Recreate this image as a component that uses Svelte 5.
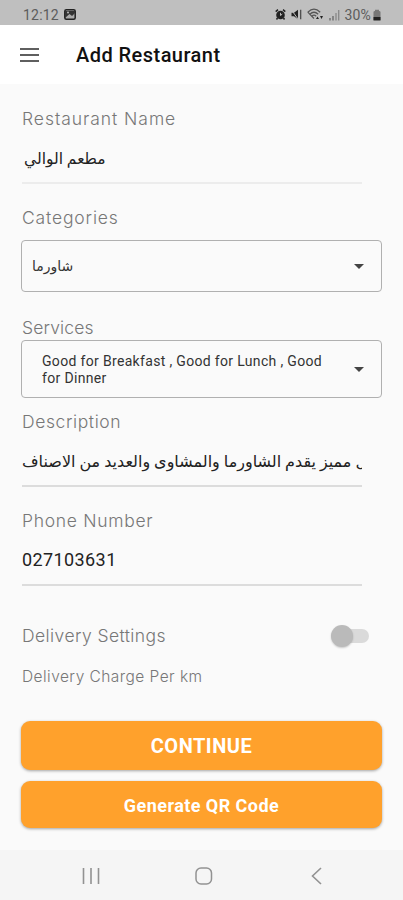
<script lang="ts">
  let restaurantName: string = 'مطعم الوالي';
  let category: string = 'شاورما';
  let services: string[] = ['Good for Breakfast', 'Good for Lunch', 'Good for Dinner'];
  let description: string = 'محل مميز يقدم الشاورما والمشاوى والعديد من الاصناف';
  let phone: string = '027103631';
  let delivery: boolean = false;
</script>

<div class="screen">
  <div class="status">
    <span class="time">12:12</span>
    <svg class="photo" width="12" height="11" viewBox="0 0 12 11">
      <rect x="0.8" y="0.8" width="10.4" height="9.4" rx="1.5" fill="#aaa" stroke="#222" stroke-width="1.5" />
      <path d="M1 2h10v2L8 7 5.500 5 1 9z" fill="#333" />
      <circle cx="4" cy="3.500" r="1" fill="#bbb" />
    </svg>
    <div class="indicators">
      <svg width="11" height="11" viewBox="0 0 11 11">
        <circle cx="5.500" cy="6" r="4.300" fill="#222" />
        <path d="M0.700 2.600L3 0.700M10.300 2.600L8 0.700M2.500 9L1.500 10.500M8.500 9l1 1.500" stroke="#222" stroke-width="1.500" />
        <path d="M5.500 3.800V6.500L7.300 5" fill="none" stroke="#bbb" />
      </svg>
      <svg width="11" height="11" viewBox="0 0 11 11">
        <path d="M0.500 3.800h2.500L7 0.800v9.400L3 7.300H0.500z" fill="#222" />
        <path d="M0.500 1L7 10" stroke="#bfbfbf" stroke-width="1" />
        <path d="M9.700 0.800v9.400" stroke="#444" stroke-width="1.200" />
      </svg>
      <svg width="17" height="13" viewBox="0 0 17 13">
        <g fill="none" stroke="#555" stroke-width="1.200">
          <path d="M0.800 4.200Q7 -1.800 13.200 4.200M2.800 6.200Q7 2.300 11.200 6.200M4.800 8.200Q7 6.200 9.200 8.200" />
          <path d="M0.800 4.200L7 10.500" />
        </g>
        <path d="M9 11l1.500-2.500L12 11zM13 8h3l-1.500 3z" fill="#222" />
      </svg>
      <svg width="11" height="12" viewBox="0 0 11 12">
        <path d="M1 9v2.500M4 7v4.500" stroke="#666" stroke-width="1.300" />
        <path d="M7 4v7.500M9.700 1v10.500" stroke="#888" stroke-width="1.300" />
      </svg>
      <span class="percent">30%</span>
      <svg width="8" height="12" viewBox="0 0 8 12">
        <path d="M0.500 3Q0.500 2 2 2V0.700h4V2Q7.500 2 7.500 3v8h-7z" fill="#777" />
        <path d="M0.500 8h7v3.500h-7z" fill="#222" />
      </svg>
    </div>
  </div>

  <header>
    <button class="menu" aria-label="Menu"><i></i><i></i><i></i></button>
    <h1>Add Restaurant</h1>
  </header>

  <main>
    <label class="label name" for="name">Restaurant Name</label>
    <div class="field arabic first" id="name"><span dir="rtl">{restaurantName}</span></div>

    <div class="label categories">Categories</div>
    <div class="select">
      <span class="value" dir="rtl">{category}</span>
      <i class="caret"></i>
    </div>

    <div class="label services">Services</div>
    <div class="select multi">
      <span class="list">{services.join(' , ')}</span>
      <i class="caret"></i>
    </div>

    <div class="label description">Description</div>
    <div class="field arabic long"><span dir="rtl">{description}</span></div>

    <div class="label phone">Phone Number</div>
    <div class="field number"><span>{phone}</span></div>

    <div class="delivery">
      <span class="label settings">Delivery Settings</span>
      <button
        class="switch"
        class:on={delivery}
        role="switch"
        aria-checked={delivery}
        aria-label="Delivery Settings"
        onclick={() => (delivery = !delivery)}
      ><i></i></button>
    </div>
    <div class="label charge">Delivery Charge Per km</div>

    <button class="primary">CONTINUE</button>
    <button class="primary qr">Generate QR Code</button>
  </main>

  <nav>
    <svg width="18" height="18" viewBox="0 0 18 18">
      <path d="M1.500 1v16M9 1v16M16.500 1v16" stroke="#929292" stroke-width="1.600" />
    </svg>
    <svg width="18" height="18" viewBox="0 0 18 18">
      <rect x="1" y="1" width="15.500" height="16" rx="5" fill="none" stroke="#929292" stroke-width="1.500" />
    </svg>
    <svg width="18" height="18" viewBox="0 0 18 18">
      <path d="M13 1L4.500 9l8.500 8" fill="none" stroke="#929292" stroke-width="1.600" />
    </svg>
  </nav>
</div>

<style>
  :global(body) {
    margin: 0;
    background: #fafafa;
  }

  .screen {
    display: flex;
    flex-direction: column;
    height: 900px;
    overflow: hidden;
    background: #fafafa;
    font-family: Roboto, 'DejaVu Sans', sans-serif;
  }

  button {
    border: none;
    padding: 0;
    font-family: inherit;
    cursor: pointer;
  }

  .status {
    box-sizing: border-box;
    display: flex;
    align-items: center;
    height: 25px;
    padding: 4px 22px 0 23px;
    background: #bfbfbf;
    color: #5c5c5c;
    font-size: 14px;
  }

  .time {
    width: 41px;
    letter-spacing: 0.2px;
  }

  .indicators {
    display: flex;
    align-items: center;
    gap: 5px;
    margin-left: auto;
  }

  .percent {
    margin: 0 -3px 0 -1px;
    letter-spacing: 0.2px;
  }

  header {
    display: flex;
    align-items: center;
    height: 59px;
    padding: 0 20px;
    background: #fff;
  }

  .menu {
    display: flex;
    flex-direction: column;
    gap: 4px;
    width: 19px;
    margin: 1px 37px 0 0;
    background: none;
  }

  .menu i {
    height: 2px;
    background: #5f5f5f;
  }

  h1 {
    margin: 1px 0 0;
    font-size: 20px;
    font-weight: 500;
    letter-spacing: 0.45px;
    color: #111;
  }

  main {
    flex: 1;
    padding: 25px 21px 0 22px;
  }

  .label {
    display: block;
    height: 20px;
    line-height: 20px;
    font-family: Inter, sans-serif;
    font-size: 17.5px;
    font-weight: 300;
    color: #777;
    white-space: nowrap;
  }

  .name {
    letter-spacing: 0.95px;
  }

  .field {
    box-sizing: border-box;
    display: flex;
    align-items: center;
    width: 340px;
    height: 55px;
    padding-top: 6px;
    border-bottom: 2px solid #dcdcdc;
    overflow: hidden;
    color: #222;
    white-space: nowrap;
  }

  .first {
    padding-left: 2px;
    border-color: #ececec;
  }

  .arabic {
    font-size: 15.5px;
  }

  .long {
    font-size: 16px;
  }

  .number {
    padding-top: 4px;
    font-size: 18px;
    letter-spacing: 0.4px;
  }

  .categories {
    margin-top: 24px;
    letter-spacing: 0.85px;
  }

  .select {
    box-sizing: border-box;
    display: flex;
    align-items: center;
    justify-content: space-between;
    height: 52px;
    margin: 12px 0 0 -1px;
    padding: 0 17px 0 10px;
    border: 1px solid #b0b0b0;
    border-radius: 4px;
    color: #333;
  }

  .value {
    font-size: 14px;
  }

  .caret {
    border: 5px solid transparent;
    border-top-color: #444;
    border-bottom: none;
  }

  .services {
    margin-top: 26px;
    letter-spacing: 0.15px;
  }

  .multi {
    height: 58px;
    margin-top: 2px;
    padding-left: 20px;
  }

  .list {
    width: 290px;
    padding-top: 1px;
    font-size: 14px;
    line-height: 17px;
    letter-spacing: 0.33px;
  }

  .description {
    margin-top: 14px;
    letter-spacing: 0.6px;
  }

  .phone {
    margin-top: 24px;
    letter-spacing: 0.7px;
  }

  .delivery {
    display: flex;
    align-items: center;
    justify-content: space-between;
    height: 24px;
    margin-top: 38px;
    padding-right: 13px;
  }

  .settings {
    letter-spacing: 0.42px;
  }

  .switch {
    display: flex;
    align-items: center;
    width: 34px;
    height: 14px;
    border-radius: 7px;
    background: #dadada;
  }

  .switch i {
    width: 22px;
    height: 22px;
    margin-left: -4px;
    border-radius: 50%;
    background: #bababa;
    box-shadow: 0 1px 2px rgba(0, 0, 0, 0.2);
  }

  .switch.on i {
    margin-left: 16px;
  }

  .charge {
    margin-top: 19px;
    font-size: 15.5px;
    letter-spacing: 0.45px;
  }

  .primary {
    display: block;
    width: calc(100% + 1px);
    height: 49px;
    margin: 34px 0 0 -1px;
    padding-top: 1px;
    border-radius: 9px;
    background: #ffa12c;
    box-shadow: 0 1px 3px rgba(0, 0, 0, 0.35);
    color: #fff;
    font-size: 20px;
    font-weight: 700;
    letter-spacing: 0.5px;
  }

  .qr {
    height: 47px;
    margin-top: 11px;
    font-size: 18px;
    letter-spacing: 0.45px;
  }

  nav {
    box-sizing: border-box;
    display: flex;
    align-items: center;
    justify-content: space-between;
    height: 50px;
    padding: 2px 77px 0 82px;
    background: #f5f5f5;
  }
</style>
